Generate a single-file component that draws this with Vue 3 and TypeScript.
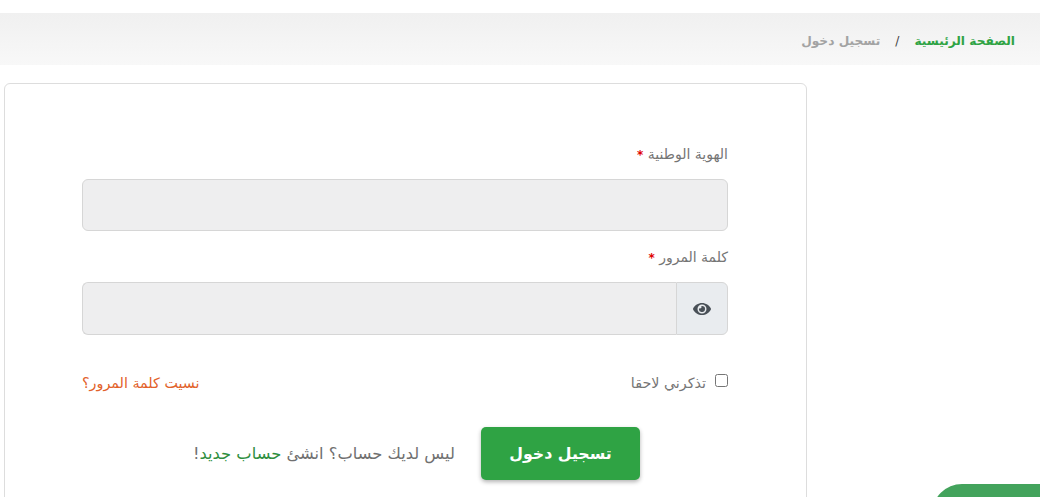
<template>
  <div class="page" dir="rtl">
    <nav class="crumbs">
      <a class="crumb-home" href="#">الصفحة الرئيسية</a>
      <span class="crumb-sep">/</span>
      <span class="crumb-current">تسجيل دخول</span>
    </nav>

    <form class="card" @submit.prevent>
      <div class="field">
        <label class="field-label">الهوية الوطنية <span class="req">*</span></label>
        <input v-model="nationalId" class="input" type="text" />
      </div>

      <div class="field field--password">
        <label class="field-label">كلمة المرور <span class="req">*</span></label>
        <div class="input-group">
          <button class="eye-btn" type="button" @click="showPassword = !showPassword">
            <svg width="18" height="12" viewBox="0 0 576 384">
              <path fill="#495057" d="M572.5 177.400C518.300 71.600 410.900 0 288 0S57.700 71.600 3.500 177.400a32.300 32.300 0 0 0 0 29.200C57.700 312.400 165.100 384 288 384s230.300-71.600 284.500-177.400a32.300 32.300 0 0 0 0-29.200zM288 336a144 144 0 1 1 144-144 143.900 143.900 0 0 1-144 144zm0-240a95.300 95.300 0 0 0-25.300 3.800 47.900 47.900 0 0 1-66.900 66.900A95.800 95.800 0 1 0 288 96z" />
            </svg>
          </button>
          <input v-model="password" class="input input--joined" :type="showPassword ? 'text' : 'password'" />
        </div>
      </div>

      <div class="options">
        <label class="remember">
          <input v-model="remember" class="check" type="checkbox" />
          <span>تذكرني لاحقا</span>
        </label>
        <a class="forgot" href="#">نسيت كلمة المرور؟</a>
      </div>

      <div class="actions">
        <button class="submit" type="submit">تسجيل دخول</button>
        <p class="signup">ليس لديك حساب؟ انشئ <a href="#">حساب جديد</a>!</p>
      </div>
    </form>

    <div class="float-pill"></div>
  </div>
</template>

<script setup lang="ts">
import { ref } from 'vue'

const nationalId = ref('')
const password = ref('')
const remember = ref(false)
const showPassword = ref(false)
</script>

<style>
html,
body {
  margin: 0;
  background: #fff;
  overflow: hidden;
}
</style>

<style scoped>
.page {
  position: relative;
  height: 497px;
  padding-top: 13px;
  box-sizing: border-box;
  overflow: hidden;
  font-family: "DejaVu Sans", "Noto Sans", sans-serif;
  font-size: 14.3px;
  color: #757575;
}

.crumbs {
  display: flex;
  align-items: center;
  height: 52px;
  padding: 3px 25px 0 0;
  box-sizing: border-box;
  background: linear-gradient(#f0f0f0, #f8f8f8);
  font-size: 12.2px;
  font-weight: 700;
}

.crumb-home {
  color: #2fa344;
  text-decoration: none;
}

.crumb-sep {
  margin: 0 15px;
  color: #444;
  font-weight: 400;
}

.crumb-current {
  color: #a3a3a3;
}

.card {
  width: 803px;
  height: 460px;
  margin: 18px 233px 0 0;
  padding: 59px 78px 0 77px;
  box-sizing: border-box;
  border: 1px solid #ddd;
  border-radius: 6px;
  background: #fff;
}

.field-label {
  display: block;
  height: 36px;
  padding-top: 1px;
  box-sizing: border-box;
  line-height: 20px;
  font-size: 14px;
  color: #757575;
}

.req {
  color: #e00000;
  font-size: 12px;
  font-weight: 700;
}

.field--password {
  margin-top: 15px;
}

.input {
  display: block;
  width: 100%;
  height: 52px;
  padding: 0 12px;
  box-sizing: border-box;
  border: 1px solid #d6d6d6;
  border-radius: 6px;
  background: #eeeeef;
  outline: none;
}

.input-group {
  display: flex;
  height: 53px;
}

.input--joined {
  flex: 1;
  width: auto;
  height: 53px;
  border-right: 0;
  border-radius: 6px 0 0 6px;
}

.eye-btn {
  display: flex;
  flex: none;
  align-items: center;
  justify-content: center;
  width: 52px;
  padding: 0;
  border: 1px solid #d6d6d6;
  border-radius: 0 6px 6px 0;
  background: #e9ecef;
}

.options {
  display: flex;
  align-items: center;
  justify-content: space-between;
  margin-top: 36px;
  height: 24px;
}

.remember {
  display: flex;
  align-items: center;
  gap: 9px;
}

.check {
  width: 13px;
  height: 13px;
  margin: 0 0 5px;
}

.forgot {
  color: #e2622a;
  text-decoration: none;
}

.actions {
  display: flex;
  align-items: center;
  gap: 26px;
  margin-top: 32px;
  padding-right: 88px;
}

.submit {
  width: 159px;
  height: 53px;
  border: 0;
  border-radius: 5px;
  background: #2fa344;
  box-shadow: 0 2px 4px rgba(0, 0, 0, 0.3);
  color: #fff;
  font-family: inherit;
  font-size: 15.8px;
  font-weight: 700;
}

.signup {
  margin: 0;
  font-size: 16.3px;
  color: #707070;
}

.signup a {
  color: #2f8f3f;
  text-decoration: none;
}

.float-pill {
  position: absolute;
  top: 484px;
  left: 932px;
  width: 160px;
  height: 60px;
  border-radius: 30px;
  background: #43a35c;
}
</style>
